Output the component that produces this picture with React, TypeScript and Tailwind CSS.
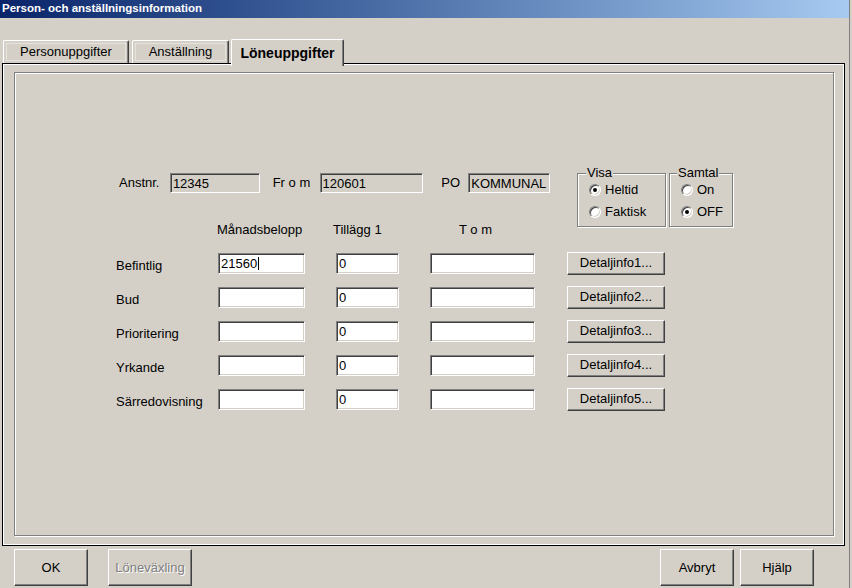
import React from 'react';

const sunken =
  'flex items-center border border-t-[#808080] border-l-[#808080] border-r-white border-b-white shadow-[inset_1px_1px_0_#404040,inset_-1px_-1px_0_#d4d0c8] pl-[2px] leading-none';

const raised =
  'flex items-center justify-center border border-t-white border-l-white border-r-[#404040] border-b-[#404040] bg-[#d4d0c8] shadow-[inset_-1px_-1px_0_#808080]';

const etched = 'border border-[#808080] shadow-[1px_1px_0_#fff,inset_1px_1px_0_#fff]';

const Radio = ({ checked, label }: { checked?: boolean; label: string }) => (
  <div className="flex h-[22px] items-center gap-[4px]">
    <div className="flex h-[12px] w-[12px] items-center justify-center rounded-full border border-t-[#808080] border-l-[#808080] border-r-white border-b-white bg-white shadow-[inset_1px_1px_0_#404040,inset_-1px_-1px_0_#d4d0c8]">
      {checked && <div className="h-[4px] w-[4px] rounded-full bg-black" />}
    </div>
    <span>{label}</span>
  </div>
);

const rows = [
  { label: 'Befintlig', value: '21560', info: 'Detaljinfo1...' },
  { label: 'Bud', value: '', info: 'Detaljinfo2...' },
  { label: 'Prioritering', value: '', info: 'Detaljinfo3...' },
  { label: 'Yrkande', value: '', info: 'Detaljinfo4...' },
  { label: 'Särredovisning', value: '', info: 'Detaljinfo5...' },
];

export default function App() {
  return (
    <div className="flex h-[588px] w-[852px] overflow-hidden bg-[#d4d0c8] font-['Liberation_Sans',Arial,sans-serif] text-[13px] text-black">
      <div className="flex w-[849px] flex-col">
        {/* Title bar */}
        <div className="flex h-[18px] items-center bg-linear-to-r from-[#0a246a] to-[#a6caf0] pl-[2px] text-[11.5px] font-bold text-white">
          Person- och anställningsinformation
        </div>

        {/* Tabs */}
        <div className="mt-[21px] flex h-[24px] items-end pl-[3px]">
          <div className="flex h-[23px] w-[126px] rounded-t-[2px] border-t border-l border-t-white border-l-white border-r border-r-[#404040] p-[2px] shadow-[inset_-1px_0_0_#808080]">
            <div className="flex flex-1 items-center justify-center border border-[#e6e3dc]">Personuppgifter</div>
          </div>
          <div className="ml-[3px] flex h-[23px] w-[97px] rounded-t-[2px] border-t border-l border-t-white border-l-white border-r border-r-[#404040] p-[2px] shadow-[inset_-1px_0_0_#808080]">
            <div className="flex flex-1 items-center justify-center border border-[#e6e3dc]">Anställning</div>
          </div>
          <div className="relative z-10 -mb-[3px] ml-[2px] flex h-[27px] w-[113px] items-center justify-center rounded-t-[2px] border-t border-l border-t-white border-l-white border-r border-r-[#404040] bg-[#d4d0c8] text-[14px] font-bold shadow-[inset_-1px_0_0_#808080]">
            Löneuppgifter
          </div>
        </div>

        {/* Tab panel */}
        <div className="ml-[2px] h-[483px] w-[843px] border border-black pt-[8px] pl-[11px] shadow-[inset_1px_1px_0_#fff,inset_-1px_-1px_0_#fff]">
          <div className={`h-[464px] w-[820px] ${etched}`}>
            <div className="mt-[93px] flex items-start pl-[104px]">
              <div className="flex w-[431px] flex-col">
                <div className="mt-[7px] flex h-[20px] items-center">
                  <span className="w-[51px]">Anstnr.</span>
                  <div className={`h-[20px] w-[90px] ${sunken}`}>12345</div>
                  <span className="ml-[13px] w-[47px]">Fr o m</span>
                  <div className={`h-[20px] w-[104px] ${sunken}`}>120601</div>
                  <span className="ml-[18px] w-[27px]">PO</span>
                  <div className={`h-[20px] w-[82px] ${sunken}`}>KOMMUNAL</div>
                </div>
                <div className="mt-[30px] flex h-[14px] items-center leading-[14px]">
                  <span className="ml-[98px] w-[116px]">Månadsbelopp</span>
                  <span className="w-[126px]">Tillägg 1</span>
                  <span>T o m</span>
                </div>
              </div>

              <fieldset className={`ml-[27px] h-[61px] w-[89px] pl-[11px] ${etched}`}>
                <legend className="-ml-[3px] bg-[#d4d0c8] px-px leading-[14px]">Visa</legend>
                <div className="-mt-px flex flex-col">
                  <Radio checked label="Heltid" />
                  <Radio label="Faktisk" />
                </div>
              </fieldset>
              <fieldset className={`ml-[3px] h-[61px] w-[64px] pl-[11px] ${etched}`}>
                <legend className="-ml-[4px] bg-[#d4d0c8] px-px leading-[14px]">Samtal</legend>
                <div className="-mt-px flex flex-col">
                  <Radio label="On" />
                  <Radio checked label="OFF" />
                </div>
              </fieldset>
            </div>

            <div className="mt-[9px] flex flex-col">
              {rows.map((row, i) => (
                <div key={row.label} className="flex h-[34px] items-center pl-[101px]">
                  <span className="w-[102px] pt-[5px]">{row.label}</span>
                  <div className={`h-[21px] w-[87px] bg-white ${sunken}`}>
                    {row.value}
                    {i === 0 && <span className="ml-px h-[13px] w-px bg-black" />}
                  </div>
                  <div className={`ml-[31px] h-[21px] w-[63px] bg-white ${sunken}`}>0</div>
                  <div className={`ml-[31px] h-[21px] w-[105px] bg-white ${sunken}`} />
                  <button className={`ml-[32px] h-[23px] w-[98px] ${raised}`}>{row.info}</button>
                </div>
              ))}
            </div>
          </div>
        </div>

        {/* Dialog buttons */}
        <div className="mt-[3px] flex h-[37px] pl-[14px] pr-[35px]">
          <button className={`w-[74px] ${raised}`}>OK</button>
          <button className={`ml-[20px] w-[84px] text-[#808080] [text-shadow:1px_1px_0_#fff] ${raised}`}>Löneväxling</button>
          <button className={`ml-auto w-[74px] ${raised}`}>Avbryt</button>
          <button className={`ml-[6px] w-[74px] ${raised}`}>Hjälp</button>
        </div>
      </div>
      <div className="w-px bg-[#808080]" />
      <div className="w-[2px] bg-[#d4d0c8]" />
    </div>
  );
}
